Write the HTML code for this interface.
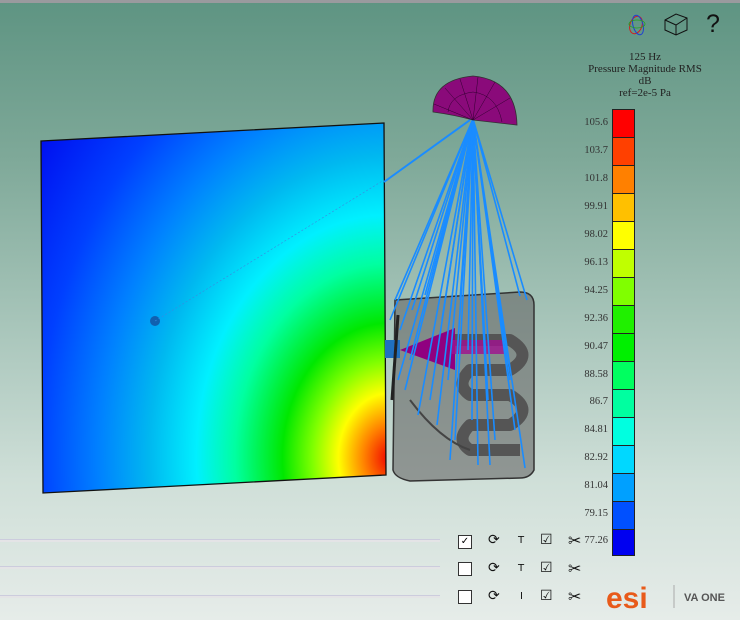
<!DOCTYPE html>
<html><head><style>
body{margin:0;width:740px;height:620px;overflow:hidden;font-family:"Liberation Serif",serif;}
#bg{position:absolute;left:0;top:0;width:740px;height:620px;background:linear-gradient(#5e9482 0px,#7fa999 160px,#a9c6bb 330px,#cfdfd8 480px,#e6ece9 620px);}
#topbar{position:absolute;left:0;top:0;width:740px;height:3px;background:#9a9a9e;}
#field{position:absolute;left:41px;top:123px;width:346px;height:371px;
clip-path:polygon(0px 18px,343px 0px,345px 352px,2px 370px);
background:radial-gradient(ellipse 430px 540px at 349px 335px,#f00000 0%,#ff8000 6%,#ffff00 12%,#80ff00 18%,#00e800 25%,#00ffa0 36%,#00f0ff 45%,#00b8f0 56%,#0080ff 68%,#0040ff 82%,#0010f0 100%);}
.lg{position:absolute;left:560px;width:48px;text-align:right;font-size:10.5px;color:#333;}
.seg{position:absolute;left:612px;width:21px;border:1px solid #222;}
.hl{position:absolute;left:0;width:440px;height:2px;background:#e4e4e6;border-top:1px solid #ccd;}
.ic{position:absolute;font-family:"DejaVu Sans",sans-serif;font-size:14px;color:#111;}
.cb{position:absolute;left:458px;width:12px;height:12px;border:1px solid #333;background:#fff;}
</style></head><body>
<div id="bg"></div><div id="topbar"></div>
<div id="field"></div>
<svg width="740" height="620" style="position:absolute;left:0;top:0">
<polygon points="41,141 384,123 386,475 43,493" fill="none" stroke="#111" stroke-width="1.3"/>
<circle cx="155" cy="321" r="5" fill="#1060b0"/>
<line x1="155" y1="321" x2="384" y2="180" stroke="#3a8ae0" stroke-width="0.6" stroke-dasharray="2,2"/>
<line x1="384" y1="182" x2="470" y2="120" stroke="#1a8cff" stroke-width="2"/>
<!-- box -->
<path d="M395 300 L520 292 Q534 292 534 305 L534 470 Q530 478 520 478 L410 481 Q395 478 393 470 Z" fill="#666" fill-opacity="0.6" stroke="#333" stroke-width="1.5"/>
<path d="M455 340 L510 340 Q535 355 510 370 L470 370 Q455 385 470 395 L510 395 Q535 410 510 425 L470 425 Q455 440 470 450 L520 450" fill="none" stroke="#555" stroke-width="12" stroke-linejoin="round"/>
<path d="M410 400 Q440 440 470 450" fill="none" stroke="#444" stroke-width="2"/>
<rect x="385" y="340" width="15" height="18" fill="#2070c0"/>
<path d="M400 350 L455 328 L455 370 Z" fill="#900080"/>
<rect x="452" y="340" width="52" height="14" fill="#a01090" fill-opacity="0.8"/>
<path d="M398 315 L392 400" stroke="#222" stroke-width="3"/>
<g stroke="#1a8cff" stroke-width="1.6">
<line x1="473" y1="119" x2="390" y2="320"/><line x1="473" y1="119" x2="395" y2="300"/><line x1="473" y1="119" x2="400" y2="330"/>
<line x1="473" y1="119" x2="405" y2="390"/><line x1="473" y1="119" x2="412" y2="310"/><line x1="473" y1="119" x2="418" y2="415"/>
<line x1="473" y1="119" x2="425" y2="295"/><line x1="473" y1="119" x2="430" y2="400"/><line x1="473" y1="119" x2="437" y2="425"/>
<line x1="473" y1="119" x2="442" y2="320"/><line x1="473" y1="119" x2="448" y2="380"/><line x1="473" y1="119" x2="455" y2="440"/>
<line x1="473" y1="119" x2="460" y2="300"/><line x1="473" y1="119" x2="468" y2="350"/><line x1="473" y1="119" x2="472" y2="420"/>
<line x1="473" y1="119" x2="478" y2="465"/><line x1="473" y1="119" x2="484" y2="340"/><line x1="473" y1="119" x2="488" y2="400"/>
<line x1="473" y1="119" x2="495" y2="440"/><line x1="473" y1="119" x2="500" y2="310"/><line x1="473" y1="119" x2="506" y2="350"/>
<line x1="473" y1="119" x2="510" y2="380"/><line x1="473" y1="119" x2="515" y2="430"/><line x1="473" y1="119" x2="520" y2="296"/>
<line x1="473" y1="119" x2="527" y2="300"/><line x1="473" y1="119" x2="525" y2="468"/><line x1="473" y1="119" x2="410" y2="360"/>
<line x1="473" y1="119" x2="398" y2="380"/><line x1="473" y1="119" x2="450" y2="460"/><line x1="473" y1="119" x2="490" y2="465"/>
</g>
<path d="M433 112 Q432 80 473 76 Q516 80 517 125 L473 120 Q455 115 433 112 Z" fill="#8a0a7a" stroke="#333" stroke-width="0.8"/>
<g stroke="#300030" stroke-width="0.5" fill="none">
<line x1="473" y1="120" x2="445" y2="88"/><line x1="473" y1="120" x2="460" y2="79"/><line x1="473" y1="120" x2="478" y2="77"/>
<line x1="473" y1="120" x2="495" y2="82"/><line x1="473" y1="120" x2="510" y2="98"/><line x1="473" y1="120" x2="434" y2="104"/>
<path d="M448 112 Q450 95 473 92 Q497 95 502 122"/>
</g>
<!-- top icons -->
<ellipse cx="636" cy="25" rx="6" ry="9" fill="none" stroke="#d02020" stroke-width="1" transform="rotate(20 636 25)"/>
<ellipse cx="638" cy="25" rx="5" ry="10" fill="none" stroke="#2040d0" stroke-width="1" transform="rotate(-15 638 25)"/>
<ellipse cx="637" cy="24" rx="8" ry="4" fill="none" stroke="#20a020" stroke-width="0.8"/>
<g fill="none" stroke="#111" stroke-width="1"><path d="M665 20 L676 14 L687 18 L687 30 L676 35 L665 30 Z M665 20 L676 25 L687 18 M676 25 L676 35"/></g>
<!-- esi logo -->
<text x="606" y="608" font-family="Liberation Sans,sans-serif" font-size="30" font-weight="bold" fill="#e85a1a">esi</text>
<line x1="674" y1="585" x2="674" y2="608" stroke="#aaa" stroke-width="1"/>
<text x="684" y="601" font-family="Liberation Sans,sans-serif" font-size="11" font-weight="bold" fill="#555">VA ONE</text>
</svg>
<div style="position:absolute;left:706px;top:10px;font-family:'Liberation Sans',sans-serif;font-size:25px;color:#111">?</div>
<div style="position:absolute;left:575px;top:51px;width:140px;text-align:center;font-size:11px;line-height:12px;color:#222">125 Hz<br>Pressure Magnitude RMS<br>dB<br>ref=2e-5 Pa</div>

<div class="seg" style="top:109px;height:27px;background:#ff0000"></div>
<div class="seg" style="top:137px;height:27px;background:#ff4000"></div>
<div class="seg" style="top:165px;height:27px;background:#ff8000"></div>
<div class="seg" style="top:193px;height:27px;background:#ffc000"></div>
<div class="seg" style="top:221px;height:27px;background:#ffff00"></div>
<div class="seg" style="top:249px;height:27px;background:#c0ff00"></div>
<div class="seg" style="top:277px;height:27px;background:#80ff00"></div>
<div class="seg" style="top:305px;height:27px;background:#20f000"></div>
<div class="seg" style="top:333px;height:27px;background:#00f000"></div>
<div class="seg" style="top:361px;height:27px;background:#00ff60"></div>
<div class="seg" style="top:389px;height:27px;background:#00ffa0"></div>
<div class="seg" style="top:417px;height:27px;background:#00ffe0"></div>
<div class="seg" style="top:445px;height:27px;background:#00d8ff"></div>
<div class="seg" style="top:473px;height:27px;background:#00a0ff"></div>
<div class="seg" style="top:501px;height:27px;background:#0050ff"></div>
<div class="seg" style="top:529px;height:25px;background:#0000f0"></div>

<div class="lg" style="top:117px">105.6</div><div class="lg" style="top:145px">103.7</div>
<div class="lg" style="top:173px">101.8</div><div class="lg" style="top:201px">99.91</div>
<div class="lg" style="top:229px">98.02</div><div class="lg" style="top:257px">96.13</div>
<div class="lg" style="top:285px">94.25</div><div class="lg" style="top:313px">92.36</div>
<div class="lg" style="top:341px">90.47</div><div class="lg" style="top:369px">88.58</div>
<div class="lg" style="top:396px">86.7</div><div class="lg" style="top:424px">84.81</div>
<div class="lg" style="top:452px">82.92</div><div class="lg" style="top:480px">81.04</div>
<div class="lg" style="top:508px">79.15</div><div class="lg" style="top:535px">77.26</div>

<div class="hl" style="top:539px"></div><div class="hl" style="top:566px"></div><div class="hl" style="top:595px"></div>

<div class="cb" style="top:535px;font-size:10px;line-height:11px;text-align:center">✓</div>
<div class="cb" style="top:562px"></div><div class="cb" style="top:590px"></div>
<div class="ic" style="left:488px;top:532px">⟳</div><div class="ic" style="left:488px;top:560px">⟳</div><div class="ic" style="left:488px;top:588px">⟳</div>
<div class="ic" style="left:518px;top:535px;font-size:10px">T</div><div class="ic" style="left:518px;top:563px;font-size:10px">T</div><div class="ic" style="left:520px;top:591px;font-size:10px">I</div>
<div class="ic" style="left:540px;top:532px">☑</div><div class="ic" style="left:540px;top:560px">☑</div><div class="ic" style="left:540px;top:588px">☑</div>
<div class="ic" style="left:568px;top:531px;font-size:16px">✂</div><div class="ic" style="left:568px;top:559px;font-size:16px">✂</div><div class="ic" style="left:568px;top:587px;font-size:16px">✂</div>
</body></html>
